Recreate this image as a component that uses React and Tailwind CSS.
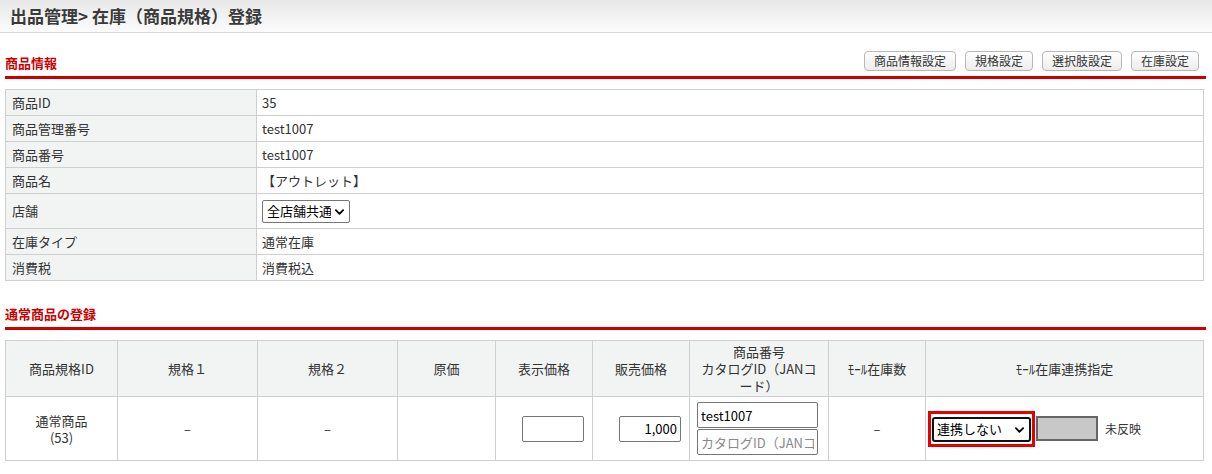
import { useState } from 'react';

const font = { fontFamily: '"Noto Sans CJK JP", "Noto Sans", sans-serif' };

const Chevron = ({ className }) => (
  <svg className={className} viewBox="0 0 10 6" fill="none" stroke="currentColor" strokeWidth="2" strokeLinecap="round" strokeLinejoin="round">
    <path d="M1 1l4 4 4-4" />
  </svg>
);

const SectionHead = ({ title, children }) => (
  <div className="flex items-end justify-between h-[30px] border-b-[3px] border-[#cc0000]">
    <h2 className="mb-[3px] text-[13px] leading-[20px] font-bold text-[#cc0000]">{title}</h2>
    <div className="flex gap-[9px] mb-[5px] mr-[7px]">{children}</div>
  </div>
);

const ToolButton = ({ label }) => (
  <button className="h-[20px] px-[9px] text-[12px] leading-[18px] text-[#333] border border-[#b8b8b8] rounded-[4px] bg-gradient-to-b from-white to-[#ececec]">
    {label}
  </button>
);

const infoRows = [
  ['商品ID', '35'],
  ['商品管理番号', 'test1007'],
  ['商品番号', 'test1007'],
  ['商品名', '【アウトレット】'],
  ['店舗', 'select'],
  ['在庫タイプ', '通常在庫'],
  ['消費税', '消費税込'],
];

export default function App() {
  const [shop, setShop] = useState('全店舗共通');
  const [link, setLink] = useState('連携しない');

  return (
    <div style={font} className="w-[1212px] min-h-[474px] bg-white text-[#333]">
      {/* page title */}
      <div className="h-[33px] flex items-center pl-[10px] border-b border-[#d6d6de] bg-gradient-to-b from-[#e8e8e8] to-[#fcfcfc]">
        <h1 className="text-[17px] leading-[22px] font-bold text-[#3a3a3a]">出品管理&gt; 在庫（商品規格）登録</h1>
      </div>

      <div className="pl-[5px] pr-[6px]">
        {/* 商品情報 */}
        <div className="mt-[16px]">
          <SectionHead title="商品情報">
            <ToolButton label="商品情報設定" />
            <ToolButton label="規格設定" />
            <ToolButton label="選択肢設定" />
            <ToolButton label="在庫設定" />
          </SectionHead>
        </div>

        <table className="mt-[10px] w-[1199px] table-fixed text-[13px] leading-[18px]">
          <tbody>
            {infoRows.map(([label, value]) => (
              <tr key={label} className={value === 'select' ? 'h-[35px]' : 'h-[26px]'}>
                <td className="w-[251px] border border-[#cfcfcf] bg-[#f2f3f3] px-[6px] align-middle">{label}</td>
                <td className="border border-[#cfcfcf] px-[5px] align-middle">
                  {value === 'select' ? (
                    <div className="relative inline-flex">
                      <select
                        value={shop}
                        onChange={(e) => setShop(e.target.value)}
                        className="appearance-none h-[23px] w-[88px] pl-[4px] pr-[18px] border border-[#767676] rounded-[2px] bg-white text-[13px] leading-[20px] text-black"
                      >
                        <option>全店舗共通</option>
                      </select>
                      <Chevron className="pointer-events-none absolute right-[6px] top-[9px] w-[9px] h-[6px] text-black" />
                    </div>
                  ) : (
                    value
                  )}
                </td>
              </tr>
            ))}
          </tbody>
        </table>

        {/* 通常商品の登録 */}
        <div className="mt-[19px]">
          <SectionHead title="通常商品の登録" />
        </div>

        <table className="mt-[10px] w-[1199px] table-fixed text-[13px] leading-[17px]">
          <colgroup>
            <col className="w-[112px]" />
            <col className="w-[140px]" />
            <col className="w-[140px]" />
            <col className="w-[98px]" />
            <col className="w-[97px]" />
            <col className="w-[97px]" />
            <col className="w-[139px]" />
            <col className="w-[97px]" />
            <col />
          </colgroup>
          <thead>
            <tr className="h-[56px] bg-[#f2f3f3]">
              <th className="border border-[#cfcfcf] font-normal">商品規格ID</th>
              <th className="border border-[#cfcfcf] font-normal">規格１</th>
              <th className="border border-[#cfcfcf] font-normal">規格２</th>
              <th className="border border-[#cfcfcf] font-normal">原価</th>
              <th className="border border-[#cfcfcf] font-normal">表示価格</th>
              <th className="border border-[#cfcfcf] font-normal">販売価格</th>
              <th className="border border-[#cfcfcf] font-normal leading-[17px]">
                商品番号<br />カタログID（JANコ<br />ード）
              </th>
              <th className="border border-[#cfcfcf] font-normal">ﾓｰﾙ在庫数</th>
              <th className="border border-[#cfcfcf] font-normal">ﾓｰﾙ在庫連携指定</th>
            </tr>
          </thead>
          <tbody>
            <tr className="h-[64px]">
              <td className="border border-[#cfcfcf] text-center">
                通常商品<br />(53)
              </td>
              <td className="border border-[#cfcfcf] text-center">–</td>
              <td className="border border-[#cfcfcf] text-center">–</td>
              <td className="border border-[#cfcfcf]"></td>
              <td className="border border-[#cfcfcf] text-right pr-[8px]">
                <input className="w-[62px] h-[26px] border border-[#767676] rounded-[2px] px-[3px] text-right align-middle" />
              </td>
              <td className="border border-[#cfcfcf] text-right pr-[8px]">
                <input defaultValue="1,000" className="w-[62px] h-[26px] border border-[#767676] rounded-[2px] px-[3px] text-right align-middle text-black" />
              </td>
              <td className="border border-[#cfcfcf] pl-[7px]">
                <div className="flex flex-col gap-[1px]">
                  <input defaultValue="test1007" className="w-[121px] h-[26px] border border-[#767676] rounded-[2px] px-[3px] text-black" />
                  <input placeholder="カタログID（JANコード）" className="w-[121px] h-[26px] border border-[#767676] rounded-[2px] px-[3px] placeholder:text-[#8a8a8a]" />
                </div>
              </td>
              <td className="border border-[#cfcfcf] text-center">–</td>
              <td className="border border-[#cfcfcf] pl-[2px]">
                <div className="flex items-center">
                  <div className="inline-flex border-[3px] border-[#e60000] px-[1px] pt-[3px] pb-[2px]">
                    <div className="relative inline-flex">
                      <select
                        value={link}
                        onChange={(e) => setLink(e.target.value)}
                        className="appearance-none h-[25px] w-[99px] pl-[3px] pr-[18px] border-2 border-[#111] rounded-[3px] bg-white text-[13px] leading-[20px] text-black"
                      >
                        <option>連携しない</option>
                        <option>連携する</option>
                      </select>
                      <Chevron className="pointer-events-none absolute right-[7px] top-[10px] w-[9px] h-[6px] text-black" />
                    </div>
                  </div>
                  <div className="ml-[1px] w-[62px] h-[25px] border-2 border-[#666] bg-[#c8c8c8]"></div>
                  <span className="ml-[7px] text-[12px]">未反映</span>
                </div>
              </td>
            </tr>
          </tbody>
        </table>
      </div>
    </div>
  );
}
